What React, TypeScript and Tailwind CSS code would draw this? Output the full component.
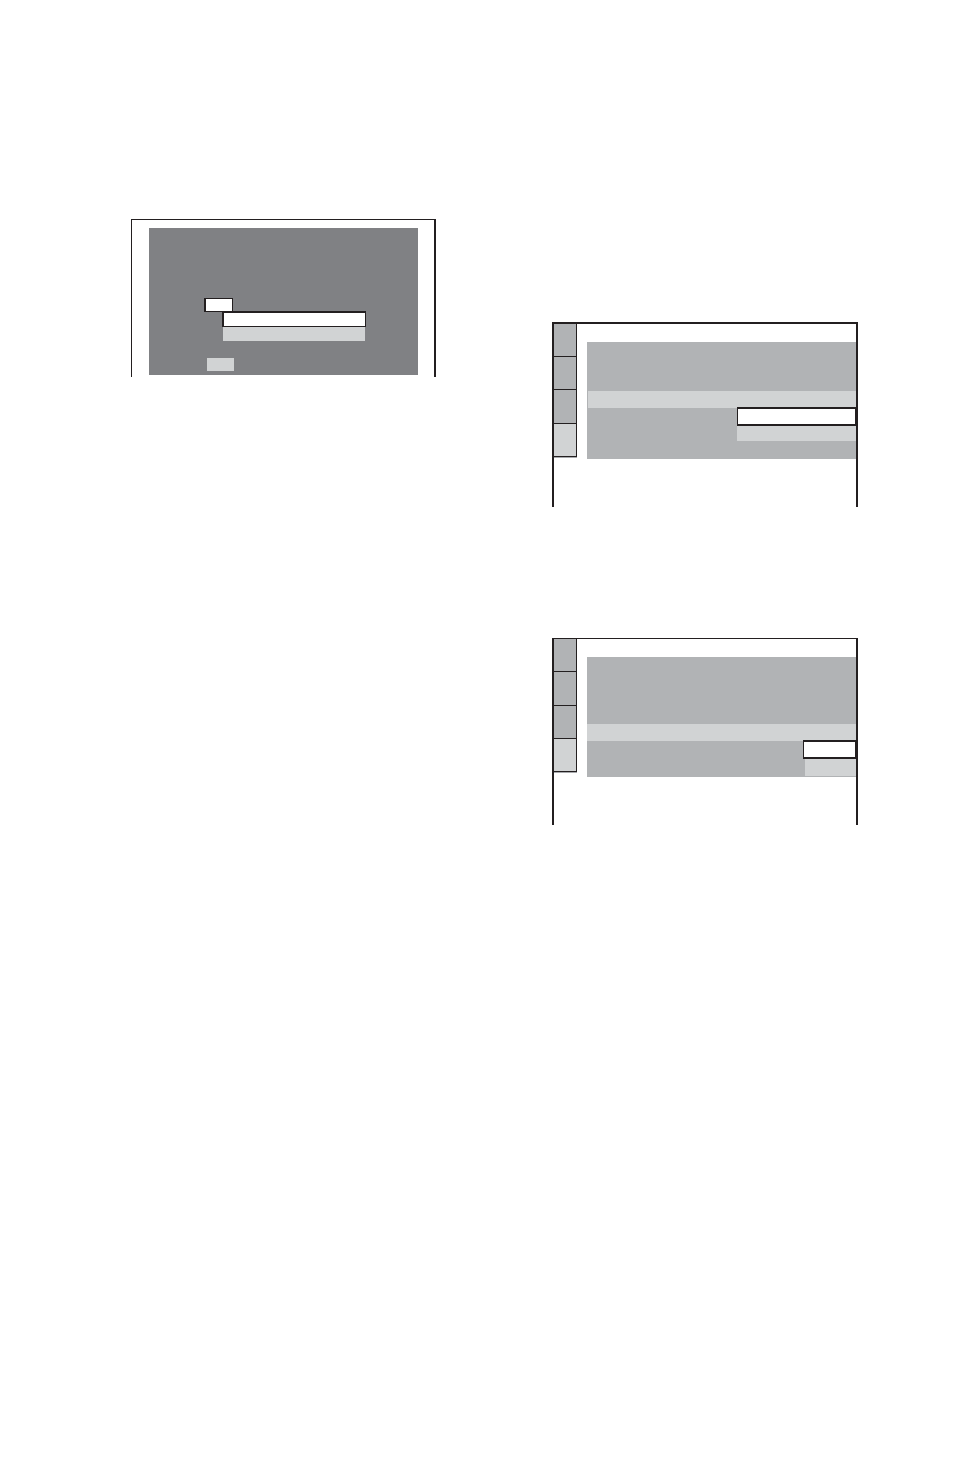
type MenuScreenProps = {
  frame: string;
  tabs: string[];
  above: string;
  row: string;
  selected: string;
  option: string;
  below: string;
  footer: string;
};

function DisplayScreen() {
  return (
    <div className="border-t border-r-2 border-l border-[#231f20] bg-white pt-2 pr-4 pb-[2px] pl-[17px]">
      <div className="bg-[#808184] pt-[70px] pb-1">
        <div className="ml-[55px] h-[14px] w-[29px] border border-l-2 border-[#231f20] bg-white" />
        <div className="-mt-px mr-[52px] ml-[73px] h-4 border border-t-2 border-l-2 border-[#231f20] bg-white" />
        <div className="mr-[53px] ml-[74px] h-[14px] bg-[#d1d3d4]" />
        <div className="mt-[17px] ml-[58px] h-[13px] w-[27px] bg-[#d1d3d4]" />
      </div>
    </div>
  );
}

function MenuScreen({ frame, tabs, above, row, selected, option, below, footer }: MenuScreenProps) {
  return (
    <div className={`flex items-start border-x-2 border-[#231f20] bg-white ${frame} ${footer}`}>
      <div className="w-[23px] shrink-0 border-b border-[#a7a9ac]">
        {tabs.map((height, i) => (
          <div
            key={i}
            className={`border-r border-b border-[#231f20] ${height} ${
              i === tabs.length - 1 ? "bg-[#d1d3d4]" : "bg-[#b1b3b5]"
            }`}
          />
        ))}
      </div>
      <div className={`mt-[18px] ml-[10px] flex-1 bg-[#b1b3b5] ${above} ${below}`}>
        <div className={`h-[17px] bg-[#d1d3d4] ${row}`} />
        <div className={`-mt-px ml-auto h-[19px] border-x border-y-2 border-[#231f20] bg-white ${selected}`} />
        <div className={`ml-auto bg-[#d1d3d4] ${option}`} />
      </div>
    </div>
  );
}

export default function App() {
  return (
    <main className="min-h-screen bg-white pr-24 pl-[131px]">
      <div className="grid grid-cols-[305fr_306fr] items-start gap-x-[116px]">
        <div className="pt-[219px]">
          <DisplayScreen />
        </div>
        <div className="flex flex-col gap-[131px] pt-[322px]">
          <MenuScreen
            frame="border-t-2"
            tabs={["h-[33px]", "h-[33px]", "h-[34px]", "h-[33px]"]}
            above="pt-[49px]"
            row="ml-px"
            selected="w-[119px]"
            option="h-[15px] w-[119px]"
            below="pb-[18px]"
            footer="pb-12"
          />
          <MenuScreen
            frame="border-t"
            tabs={["h-[33px]", "h-[34px]", "h-[33px]", "h-[33px]"]}
            above="pt-[67px]"
            row="ml-0"
            selected="w-[53px]"
            option="h-[17px] w-[51px]"
            below="pb-px"
            footer="pb-12"
          />
        </div>
      </div>
    </main>
  );
}
